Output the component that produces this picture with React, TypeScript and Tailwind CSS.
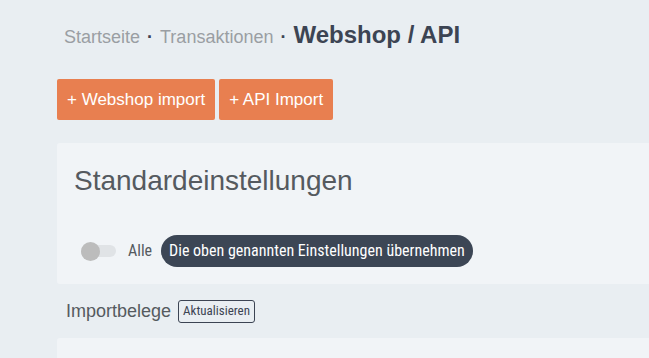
import React from 'react';

const narrow = "font-['Liberation_Sans_Narrow','Roboto_Condensed',sans-serif]";

const App: React.FC = () => {
  return (
    <div className="h-[358px] bg-[#e9eef2] font-['Liberation_Sans',Arial,sans-serif] overflow-hidden">
      <div className="pl-[57px] pt-[17px]">
        {/* breadcrumb */}
        <div className="flex items-baseline pl-[7px] h-[30px]">
          <span className="text-[18px] text-[#9a9ea3]">Startseite</span>
          <span className="mx-[7px] text-[18px] text-[#3c4453] font-bold">·</span>
          <span className="text-[18px] text-[#9a9ea3]">Transaktionen</span>
          <span className="mx-[7px] text-[18px] text-[#3c4453] font-bold">·</span>
          <span className="text-[24px] font-bold text-[#3c4453]">Webshop / API</span>
        </div>

        <div className="flex gap-[4px] mt-[32px]">
          <button className="h-[41px] px-[10px] rounded-[2px] bg-[#e87f50] text-white text-[17px]">+ Webshop import</button>
          <button className="h-[41px] px-[10px] rounded-[2px] bg-[#e87f50] text-white text-[17px]">+ API Import</button>
        </div>

        <div className="mt-[23px] bg-[#f1f4f7] rounded-l-[3px] h-[141px] pl-[17px] pt-[22px]">
          <h2 className="text-[28px] text-[#555a5f] leading-[32px]">Standardeinstellungen</h2>
          <div className="flex items-center mt-[38px] pl-[7px]">
            <div className="relative w-[36px] h-[19px] flex items-center">
              <div className="w-[35px] h-[12px] rounded-full bg-[#e0e3e6]" />
              <div className="absolute left-0 top-0 w-[19px] h-[19px] rounded-full bg-[#bcbcbc]" />
            </div>
            <span className={`ml-[11px] text-[16px] text-[#555a5f] ${narrow}`}>Alle</span>
            <span className={`ml-[9px] h-[32px] px-[8px] flex items-center rounded-full bg-[#3c4655] text-white text-[16px] ${narrow}`}>Die oben genannten Einstellungen übernehmen</span>
          </div>
        </div>

        <div className="flex items-center h-[54px] pl-[9px]">
          <span className="text-[18px] text-[#555a5f]">Importbelege</span>
          <span className={`ml-[7px] h-[23px] px-[4px] flex items-center border border-[#3c4453] rounded-[3px] text-[13px] text-[#3c4453] ${narrow}`}>Aktualisieren</span>
        </div>

        <div className="bg-[#f1f4f7] rounded-l-[3px] h-[40px]" />
      </div>
    </div>
  );
};

export default App;
